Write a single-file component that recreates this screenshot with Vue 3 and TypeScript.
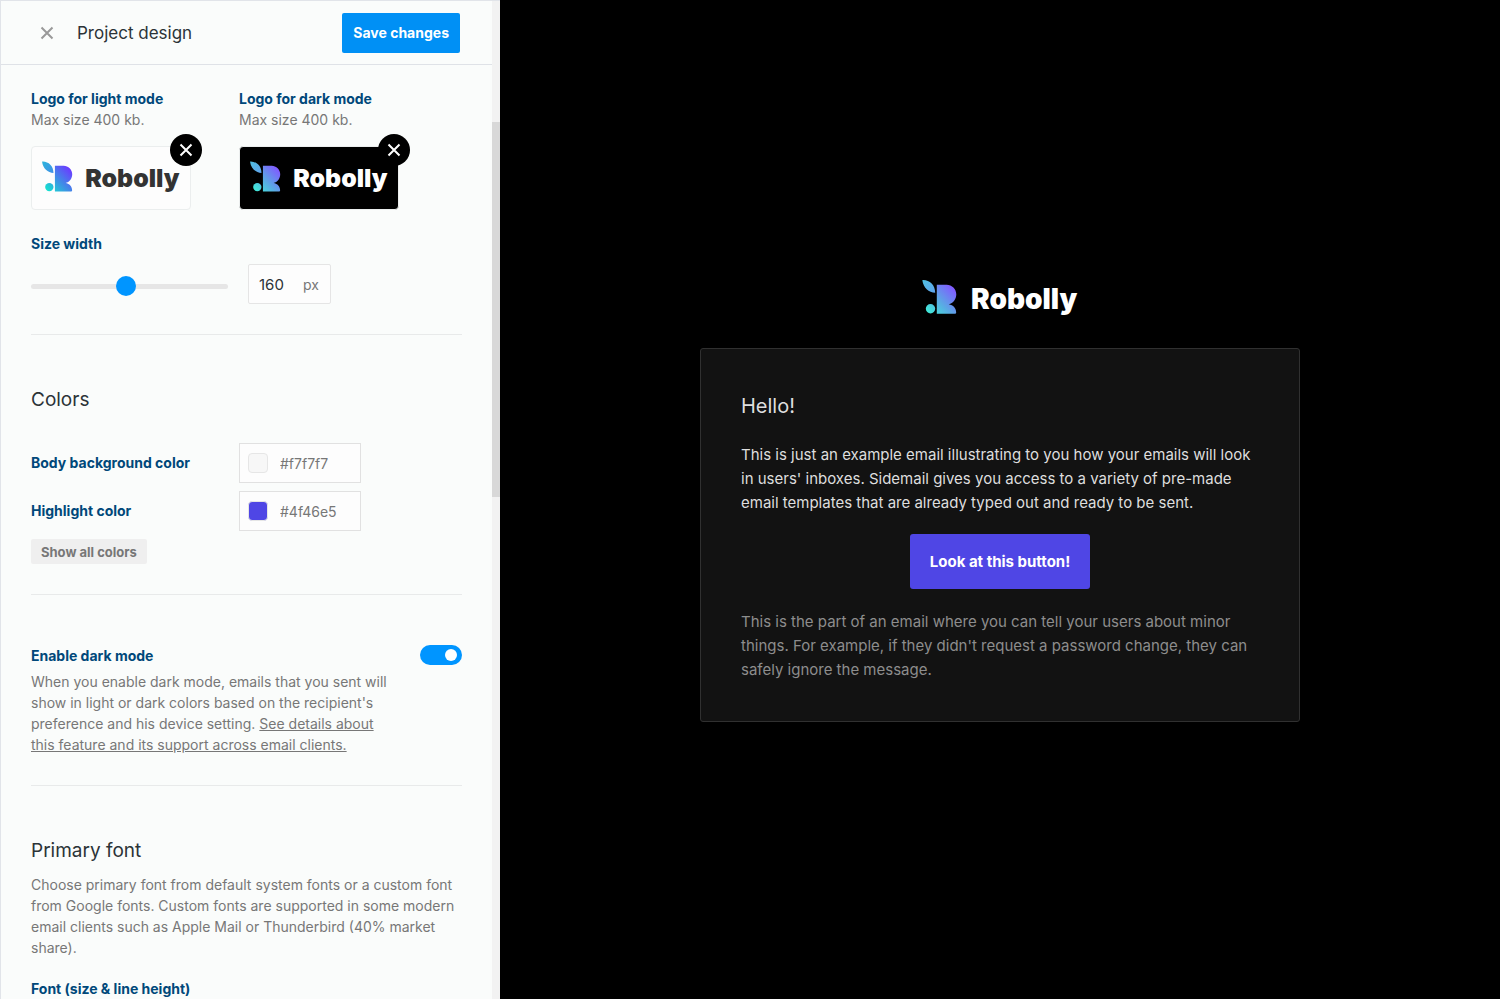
<script setup lang="ts">
import { reactive, ref } from 'vue'

interface LogoSlot {
  id: string
  label: string
  dark: boolean
}

interface ColorField {
  id: string
  label: string
  value: string
}

const logos: LogoSlot[] = [
  { id: 'light', label: 'Logo for light mode', dark: false },
  { id: 'dark', label: 'Logo for dark mode', dark: true },
]

const colors = reactive<ColorField[]>([
  { id: 'body-bg', label: 'Body background color', value: '#f7f7f7' },
  { id: 'highlight', label: 'Highlight color', value: '#4f46e5' },
])

const logoWidth = ref<number>(160)
const darkMode = ref<boolean>(true)
</script>

<template>
  <div class="page">
    <svg class="defs" width="0" height="0" aria-hidden="true">
      <defs>
        <linearGradient id="mark-light" gradientUnits="userSpaceOnUse" x1="8" y1="36" x2="33" y2="12">
          <stop offset="0" stop-color="#16e0d0" />
          <stop offset="0.45" stop-color="#3c94e4" />
          <stop offset="1" stop-color="#6a3dff" />
        </linearGradient>
        <linearGradient id="mark-dark" gradientUnits="userSpaceOnUse" x1="8" y1="36" x2="33" y2="12">
          <stop offset="0" stop-color="#40e8d8" />
          <stop offset="0.45" stop-color="#5aaae4" />
          <stop offset="1" stop-color="#805cff" />
        </linearGradient>
        <linearGradient id="leaf-light" gradientUnits="userSpaceOnUse" x1="3" y1="4" x2="15" y2="16">
          <stop offset="0" stop-color="#2cb4dc" />
          <stop offset="1" stop-color="#3f90e6" />
        </linearGradient>
        <linearGradient id="leaf-dark" gradientUnits="userSpaceOnUse" x1="3" y1="4" x2="15" y2="16">
          <stop offset="0" stop-color="#50bfe2" />
          <stop offset="1" stop-color="#60a4ec" />
        </linearGradient>
        <path id="leaf" d="M2.4 4.4C2.4 4 2.7 3.9 3.2 4C9.8 4.2 15.2 9 15.2 16.8C8.8 16.6 3.2 11.4 2.4 4.4Z" />
        <g id="mark">
          <circle cx="10.5" cy="32.8" r="4.7" />
          <path d="M16.8 8.7H26.6C32 8.7 36.3 13 36.3 18.3C36.3 23.3 33.2 27.2 28.8 28.2C33.2 28.9 36.2 32.2 36.2 36.6Q36.2 37.8 35 37.8H16.8Z" />
        </g>
      </defs>
    </svg>

    <aside class="panel">
      <div class="panel-main">
        <header class="panel-head">
          <button class="close" type="button" aria-label="Close">
            <svg width="14" height="14" viewBox="0 0 14 14"><path d="M1.5 1.5L12.5 12.5M12.5 1.5L1.5 12.5" /></svg>
          </button>
          <h1>Project design</h1>
          <button class="save" type="button">Save changes</button>
        </header>

        <div class="panel-body">
          <section class="section logo-section">
            <div class="logos">
              <div v-for="logo in logos" :key="logo.id" class="logo-slot">
                <h3 class="label">{{ logo.label }}</h3>
                <p class="hint">Max size 400 kb.</p>
                <div class="logo-box" :class="{ dark: logo.dark }">
                  <svg class="logo" viewBox="0 0 160 44" role="img" aria-label="Robolly">
                    <use href="#leaf" :fill="logo.dark ? 'url(#leaf-dark)' : 'url(#leaf-light)'" />
                    <use href="#mark" :fill="logo.dark ? 'url(#mark-dark)' : 'url(#mark-light)'" />
                    <text x="51" y="33">Robolly</text>
                  </svg>
                  <button class="remove" type="button" :aria-label="'Remove ' + logo.label">
                    <svg width="14" height="14" viewBox="0 0 14 14"><path d="M1.5 1.5L12.5 12.5M12.5 1.5L1.5 12.5" /></svg>
                  </button>
                </div>
              </div>
            </div>

            <label class="label" for="logo-width">Size width</label>
            <div class="size-row">
              <input id="logo-width" v-model.number="logoWidth" class="slider" type="range" min="40" max="290" />
              <div class="size-box">
                <input v-model.number="logoWidth" type="text" inputmode="numeric" aria-label="Size width in pixels" />
                <span>px</span>
              </div>
            </div>
          </section>

          <section class="section colors-section">
            <h2>Colors</h2>
            <div class="colors">
              <div v-for="color in colors" :key="color.id" class="color-row">
                <label class="label" :for="color.id">{{ color.label }}</label>
                <div class="color-box">
                  <span class="swatch" :style="{ backgroundColor: color.value }"></span>
                  <input :id="color.id" v-model="color.value" type="text" />
                </div>
              </div>
            </div>
            <button class="show-all" type="button">Show all colors</button>
          </section>

          <section class="section mode-section">
            <div class="mode-text">
              <label class="label" for="dark-mode">Enable dark mode</label>
              <p class="hint">
                When you enable dark mode, emails that you sent will show in light or dark colors based on the
                recipient's preference and his device setting.
                <a href="#">See details about this feature and its support across email clients.</a>
              </p>
            </div>
            <input id="dark-mode" v-model="darkMode" class="toggle" type="checkbox" role="switch" />
          </section>

          <section class="font-section">
            <h2>Primary font</h2>
            <p class="hint">
              Choose primary font from default system fonts or a custom font from Google fonts. Custom fonts are
              supported in some modern email clients such as Apple Mail or Thunderbird (40% market share).
            </p>
            <h3 class="label">Font (size &amp; line height)</h3>
          </section>
        </div>
      </div>
      <div class="scrollbar" aria-hidden="true"><div class="thumb"></div></div>
    </aside>

    <main class="preview">
      <svg class="logo preview-logo" viewBox="0 0 160 44" role="img" aria-label="Robolly">
        <use href="#leaf" fill="url(#leaf-dark)" />
        <use href="#mark" fill="url(#mark-dark)" />
        <text x="51" y="33">Robolly</text>
      </svg>
      <article class="card">
        <h2>Hello!</h2>
        <p>
          This is just an example email illustrating to you how your emails will look in users' inboxes. Sidemail gives
          you access to a variety of pre-made email templates that are already typed out and ready to be sent.
        </p>
        <a class="cta" href="#">Look at this button!</a>
        <p class="minor">
          This is the part of an email where you can tell your users about minor things. For example, if they didn't
          request a password change, they can safely ignore the message.
        </p>
      </article>
    </main>
  </div>
</template>

<style>
body {
  margin: 0;
  background: #000;
}
</style>

<style scoped>
.page {
  display: grid;
  grid-template-columns: 1fr 2fr;
  height: 100vh;
  overflow: hidden;
  font-family: Inter, 'Liberation Sans', sans-serif;
  color: #2b3337;
}

.page * {
  box-sizing: border-box;
}

.defs {
  position: absolute;
}

h1,
h2,
h3,
p {
  margin: 0;
  font-weight: 400;
}

button,
input {
  font-family: inherit;
}

button {
  padding: 0;
  border: 0;
  cursor: pointer;
}

.panel {
  display: flex;
  min-width: 0;
  height: 100vh;
  overflow: hidden;
  background: #fafcfb;
  border-top: 1px solid #e1e4e9;
  border-left: 1px solid #e1e4e9;
}

.panel-main {
  flex: 1;
  min-width: 0;
}

.scrollbar {
  width: 8px;
  padding-top: 121px;
  background: #f2f2f2;
}

.thumb {
  height: 375px;
  background: #d8d8d8;
}

.panel-head {
  display: flex;
  align-items: center;
  height: 64px;
  padding: 0 32px 0 38px;
  border-bottom: 1px solid #dfe2e7;
}

.close {
  display: flex;
  padding: 1px;
  background: none;
}

.close svg {
  fill: none;
  stroke: #999;
  stroke-width: 2;
}

h1 {
  flex: 1;
  margin-left: 22px;
  font-size: 17px;
  line-height: 24px;
}

.save {
  height: 40px;
  padding: 0 11px;
  border-radius: 2px;
  background: #0090f5;
  color: #fff;
  font-size: 14px;
  font-weight: 700;
}

.panel-body {
  padding: 0 30px;
}

.section {
  border-bottom: 1px solid #e8eaea;
}

.label {
  display: block;
  color: #00487a;
  font-size: 14px;
  font-weight: 700;
  line-height: 21px;
}

.hint {
  color: #777;
  font-size: 14px;
  line-height: 21px;
}

.hint a {
  color: inherit;
}

.logo-section {
  padding: 23px 0 30px;
}

.logos {
  display: flex;
  gap: 48px;
  margin-bottom: 23px;
}

.logo-box {
  position: relative;
  display: flex;
  align-items: center;
  justify-content: center;
  width: 160px;
  height: 64px;
  margin-top: 16px;
  border: 1px solid #ebeeee;
  border-radius: 4px;
  background: #fdfdfd;
}

.logo-box .logo {
  width: 142px;
}

.logo text {
  fill: #333;
  font-family: Inter, 'Liberation Sans', sans-serif;
  font-size: 28px;
  font-weight: 900;
}

.logo-box.dark {
  background: #000;
}

.logo-box.dark text,
.preview-logo text {
  fill: #fff;
}

.remove {
  position: absolute;
  top: -13px;
  right: -12px;
  display: flex;
  align-items: center;
  justify-content: center;
  width: 32px;
  height: 32px;
  border-radius: 50%;
  background: #000;
}

.remove svg {
  fill: none;
  stroke: #fff;
  stroke-width: 2;
}

.size-row {
  display: flex;
  align-items: center;
  gap: 20px;
  margin-top: 10px;
}

.slider {
  width: 197px;
  height: 20px;
  margin: 4px 0 0;
  appearance: none;
  background: none;
}

.slider::-webkit-slider-runnable-track {
  height: 5px;
  border-radius: 3px;
  background: #e6e6e6;
}

.slider::-webkit-slider-thumb {
  width: 20px;
  height: 20px;
  margin-top: -8px;
  appearance: none;
  border-radius: 50%;
  background: #0095ff;
}

.size-box {
  display: flex;
  align-items: center;
  justify-content: space-between;
  width: 83px;
  height: 40px;
  padding: 0 11px 0 10px;
  border: 1px solid #e5e5e5;
  border-radius: 2px;
  background: #fdfdfd;
  color: #777;
  font-size: 14px;
}

.size-box input {
  width: 36px;
  padding: 0;
  border: 0;
  background: none;
  color: #2b3337;
  font-size: 15px;
}

.panel h2 {
  font-size: 19px;
  line-height: 28px;
}

.colors-section {
  padding: 51px 0 30px;
}

.colors {
  display: grid;
  gap: 8px;
  margin: 29px 0 8px;
}

.color-row {
  display: grid;
  grid-template-columns: 208px 122px;
  align-items: center;
}

.color-row .label {
  line-height: 20px;
}

.color-box {
  display: flex;
  align-items: center;
  gap: 12px;
  height: 40px;
  padding: 0 8px;
  border: 1px solid #e1e1e1;
  background: #fdfdfd;
}

.swatch {
  flex: none;
  width: 20px;
  height: 20px;
  border: 1px solid #e6e6e6;
  border-radius: 4px;
}

.color-box input {
  width: 72px;
  height: 20px;
  padding: 0;
  border: 0;
  background: none;
  color: #777;
  font-size: 14px;
}

.show-all {
  display: block;
  height: 25px;
  padding: 0 10px;
  border-radius: 2px;
  background: #efefef;
  color: #777;
  font-size: 13px;
  font-weight: 700;
}

.mode-section {
  display: flex;
  align-items: flex-start;
  justify-content: space-between;
  padding: 50px 0 30px;
}

.mode-text {
  width: 360px;
}

.mode-text .hint {
  margin-top: 5px;
}

.toggle {
  display: flex;
  align-items: center;
  width: 42px;
  height: 20px;
  margin: 0;
  padding: 0 5px;
  appearance: none;
  border-radius: 10px;
  background: #ccc;
}

.toggle::before {
  width: 12px;
  height: 12px;
  border-radius: 50%;
  background: #fff;
  content: '';
}

.toggle:checked {
  justify-content: flex-end;
  background: #0095ff;
}

.font-section {
  padding-top: 51px;
}

.font-section .hint {
  margin: 9px 0 20px;
}

.preview {
  display: flex;
  flex-direction: column;
  align-items: center;
  justify-content: center;
  min-width: 0;
  padding-bottom: 1px;
  background: #000;
}

.preview-logo {
  width: 160px;
  margin-bottom: 28px;
}

.card {
  width: 100%;
  max-width: 600px;
  padding: 40px 40px 39px;
  border: 1px solid #303030;
  border-radius: 3px;
  background: #121212;
  color: #dedede;
  font-size: 15px;
  line-height: 24px;
  text-align: center;
}

.card h2,
.card p {
  text-align: left;
}

.card h2 {
  margin-bottom: 20px;
  font-size: 20px;
  line-height: 34px;
}

.cta {
  display: inline-block;
  margin: 19px 0 21px;
  padding: 0 20px;
  border-radius: 3px;
  background: #4f46e5;
  color: #fff;
  font-weight: 700;
  line-height: 55px;
  text-decoration: none;
  vertical-align: top;
}

.card .minor {
  color: #8d8d8d;
}
</style>
